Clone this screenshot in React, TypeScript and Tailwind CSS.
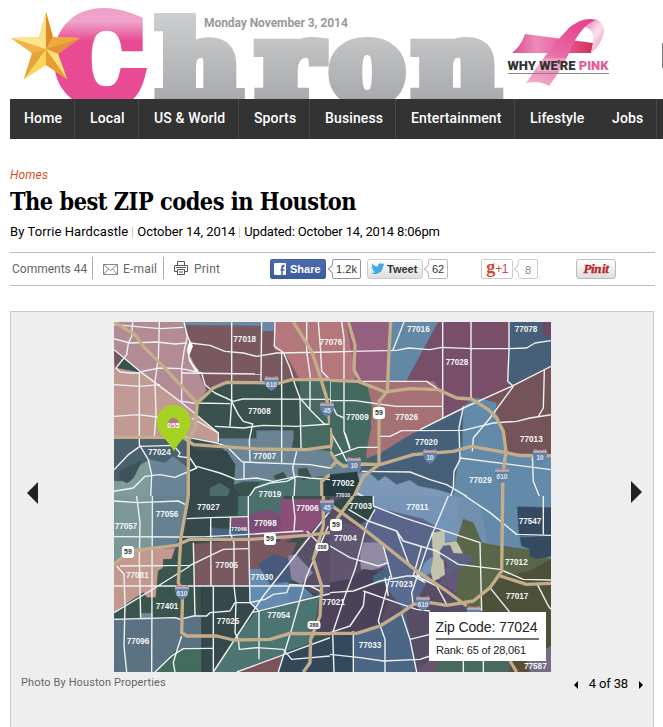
import React from "react";

type Shape = [string, string];
type Label = [string, number, number];

interface TileData {
  id: string;
  x: number;
  y: number;
  base: string;
  areas: Shape[];
  streets: string[];
  freeways: string[];
  labels: Label[];
}

// Each quadrant is drawn on a grid three times finer than the map itself.
const tiles: TileData[] = [
  {
    id: "nw", x: 110, y: 318, base: "#3a524e",
    areas: [
      ["12,12 222,12 235,60 240,110 265,160 285,195 290,215 262,260 180,235 95,165 12,95", "#b28b94"],
      ["12,95 35,125 15,150 95,165 215,255 325,345 325,375 240,355 12,358", "#c09a93"],
      ["95,165 180,180 262,260 250,290 215,255", "#b28b94"],
      ["12,95 35,125 15,150", "#70575c"],
      ["222,12 495,12 495,40 222,40", "#6989a4"],
      ["225,22 455,24 458,42 495,40 495,95 525,105 570,185 360,190 290,215 265,160 240,110 235,60", "#79595f"],
      ["495,12 660,12 660,185 570,185 525,105 495,95", "#b4777b"],
      ["570,190 660,190 660,395 575,395", "#48695f"],
      ["325,362 440,362 440,338 550,338 550,360 545,390 660,400 660,490 400,490 370,500 370,460 350,410", "#6a8495"],
      ["12,360 235,360 240,540 12,540", "#4b606d"],
      ["12,490 60,492 75,450 120,425 125,540 12,540", "#809c9a"],
      ["120,425 165,435 190,415 232,450 232,540 120,540", "#698597"],
      ["30,460 65,440 95,430 70,480 50,495 28,480", "#3d525a"],
      ["240,385 270,400 350,400 375,440 370,510 400,540 240,540", "#354849"],
      ["300,510 330,495 360,515 350,540 300,540", "#4c6c69"],
      ["450,495 520,480 660,475 660,540 410,540", "#4a716c"],
      ["565,475 565,452 590,450 605,480 580,485", "#3b504f"],
      ["490,475 520,462 530,478 505,490", "#3b504f"],
      ["635,490 660,475 660,540 635,530", "#263b3b"],
    ],
    streets: [
      "M68 12 65 55 55 75 50 110 18 150 30 162 60 165 90 165",
      "M12 20 150 32 220 28", "M12 62 60 75 140 72 195 78 230 75",
      "M148 12 145 120 135 190 138 290 133 355",
      "M12 95 90 160 210 250 325 345 325 372",
      "M88 162 88 380 115 425 125 470 122 540",
      "M12 200 90 205 150 200", "M12 295 85 290 140 297 155 300",
      "M95 160 150 150 215 152 275 165 285 200 315 225 370 250 398 243 660 244",
      "M222 12 232 55 222 100 215 150 215 250 250 255 360 257",
      "M240 75 300 82 345 100 400 105 440 115 500 105 660 102",
      "M365 12 365 245 360 325", "M455 12 453 190",
      "M495 12 493 85 520 103 540 150 555 200 570 240 600 275 645 320",
      "M215 165 455 168", "M515 100 515 435",
      "M590 12 590 100 600 170 600 275", "M625 12 632 100 635 160 660 185",
      "M315 325 400 330 460 322 560 325 660 318",
      "M365 250 385 290 400 310 428 318 418 365 420 430",
      "M245 300 325 345", "M220 355 320 375 350 385 390 425 402 435 402 485",
      "M570 240 573 390", "M400 432 520 437 600 440 660 450",
      "M12 455 55 410 90 385 190 382 210 405 205 415 240 420 260 450 195 478 150 470 105 475 70 510 12 520",
      "M260 445 330 465 380 485 440 480 490 490 560 475 600 480 660 485",
      "M415 540 435 510 480 495 530 490 560 475", "M560 400 548 450 555 485 552 540",
    ],
    freeways: [
      "M12 12 75 50 100 85 160 145 210 200 262 255",
      "M262 255 310 210 350 193 510 195 545 185 660 185",
      "M262 255 255 330 235 370 235 540",
      "M12 358 220 358 250 380 370 388 440 393 590 395 660 385",
      "M550 12 580 60 605 100 630 175 650 240 660 320",
      "M635 540 635 490 660 470",
    ],
    labels: [["77018", 404, 72], ["77008", 448, 287], ["77024", 148, 410], ["77007", 464, 424]],
  },
  {
    id: "ne", x: 330, y: 318, base: "#46607a",
    areas: [
      ["0,12 75,12 75,185 0,185", "#b4777b"],
      ["48,12 190,12 175,100 175,190 90,190 75,150", "#95607f"],
      ["185,12 325,12 230,190 172,190", "#6288a6"],
      ["325,12 535,12 535,205 400,265 340,300 340,225 310,190 230,188", "#784e69"],
      ["537,12 663,12 663,145 537,205", "#46607a"],
      ["637,12 663,12 663,60 640,50", "#6d4967"],
      ["663,145 663,412 530,405 520,340 490,270 430,245 537,205", "#745359"],
      ["108,190 310,190 340,225 340,300 240,350 150,405 110,420 105,380 125,330 112,250", "#a57175"],
      ["0,190 108,190 125,260 120,340 105,420 140,435 0,440", "#446a60"],
      ["400,265 440,240 500,255 495,280 520,340 530,405 663,410 663,540 370,540 385,425 398,395", "#638aa9"],
      ["85,465 115,462 145,490 165,475 200,500 240,487 265,505 320,515 370,530 370,540 70,540", "#7d99b7"],
      ["0,410 30,435 95,445 80,480 0,475", "#637f90"],
      ["0,470 80,462 90,500 60,540 0,540", "#263c40"],
    ],
    streets: [
      "M35 12 42 60 42 340 60 395", "M0 102 70 100 200 97 235 90 300 95 335 88 425 92 535 92 590 90 615 75 663 68",
      "M338 12 338 300", "M423 12 423 245", "M537 12 537 100 533 190 550 205",
      "M222 12 188 98", "M80 190 290 190 320 210", "M0 248 75 248 145 258 200 265 338 265",
      "M270 335 400 270 545 205 663 145", "M643 155 640 270 625 295",
      "M550 205 480 300 430 360 427 400", "M150 355 180 355 215 338 400 337 490 315 560 310 600 300 663 290",
      "M400 265 387 330 390 425 372 460 370 510 360 540", "M390 420 663 455", "M607 415 610 490 630 540",
      "M95 460 240 462 300 485 350 500 410 535", "M10 415 85 388 145 388", "M0 340 35 400 50 430",
      "M0 190 0 250 20 290 42 300", "M80 525 110 540", "M45 345 60 390",
    ],
    freeways: [
      "M55 12 75 80 72 155 90 190", "M182 12 177 100 172 220",
      "M0 187 85 190 165 222 240 212 325 215 380 240 425 243 475 275 500 300 520 340 528 400 518 470 518 540",
      "M170 222 147 250 147 435", "M0 400 20 430 40 445 90 438 150 440 250 410 370 400 425 385 535 405 570 413 663 413",
      "M150 438 100 475 70 540", "M0 330 5 370 0 395", "M20 430 0 450",
    ],
    labels: [["77016", 265, 42], ["77078", 588, 42], ["77028", 381, 142], ["77009", 82, 306], ["77026", 230, 306], ["77020", 289, 381], ["77013", 604, 372], ["77029", 451, 495], ["77002", 39, 504]],
  },
  {
    id: "sw", x: 110, y: 496, base: "#3b514e",
    areas: [
      ["12,0 125,0 125,150 12,210", "#7b9796"],
      ["125,0 235,0 215,150 125,150", "#64818f"],
      ["12,205 60,165 205,155 185,190 160,190 160,215 145,225 138,305 110,305 100,290 45,325 12,350", "#c2988f"],
      ["205,130 250,140 250,365 12,365 12,350 100,290 110,305 138,305 145,225 160,215 160,190 185,190", "#3a554e"],
      ["12,368 275,363 275,528 12,528", "#5a7282"],
      ["90,352 128,352 128,370 90,370", "#758999"],
      ["135,528 200,460 275,455 275,528", "#456b5e"],
      ["275,272 310,270 310,528 275,528", "#30443f"],
      ["235,0 385,0 380,50 350,65 360,110 215,132", "#35484a"],
      ["300,95 415,105 415,125 300,125", "#486582"],
      ["360,62 415,62 415,105 360,90", "#7e5179"],
      ["385,0 520,0 520,60 385,60", "#4a716c"],
      ["418,60 440,48 480,42 515,60 535,115 418,135", "#7c4e77"],
      ["512,10 645,10 645,60 600,110 512,140", "#8b4e79"],
      ["252,145 420,130 560,140 535,200 480,260 420,268 252,268", "#79585f"],
      ["418,220 470,220 540,265 560,290 535,335 440,340 418,320", "#648cb3"],
      ["445,205 490,175 540,190 545,255 480,265", "#455a7c"],
      ["535,180 580,170 610,230 575,265 545,250", "#8b849f"],
      ["535,265 570,265 610,300 440,345 540,330", "#5f82a9"],
      ["555,170 600,110 660,60 660,300 610,290 575,265 610,230", "#594f67"],
      ["310,270 418,270 418,320 440,345 375,430 310,528 278,528 278,272", "#35484a"],
      ["440,345 630,300 615,420 520,528 310,528 375,430", "#4c7571"],
      ["375,528 515,478 500,528", "#7b5359"],
      ["520,470 660,425 660,528 505,528", "#33475b"],
      ["630,300 660,295 660,420 612,410", "#4c445b"],
    ],
    streets: [
      "M12 15 85 20 205 15 225 25", "M80 0 90 80 88 190 92 365", "M127 0 125 528",
      "M12 122 200 123 290 122 415 115 580 105", "M230 68 300 65 415 62",
      "M302 65 303 270", "M362 62 360 110 372 140 372 270 378 320 375 410 385 430 388 460 440 455 520 460",
      "M415 0 415 62 420 320", "M250 140 255 360", "M30 210 240 208 340 160 415 158",
      "M12 350 120 285 240 210", "M12 270 660 270", "M20 210 42 235 45 325 42 450 50 528",
      "M12 370 195 365 210 370 250 360 290 360 300 350 360 345 375 320 420 320 465 310 490 295 530 290 540 265 600 270 640 290",
      "M310 270 310 528", "M310 528 420 360 460 300 660 45", "M420 320 447 345 447 490",
      "M425 350 630 300 660 293", "M380 528 660 425", "M215 420 205 450 190 500 195 528",
      "M135 528 185 480 220 458 310 457", "M505 528 545 400 590 240 655 90",
      "M520 460 545 490 660 480", "M548 0 555 65 552 105", "M590 105 625 140",
    ],
    freeways: [
      "M235 0 212 130 205 260 218 285 215 410 230 420 320 420 370 432 480 430 540 412 660 413",
      "M12 205 60 165 200 148 240 130 420 130 590 118 660 110",
      "M640 0 640 90 610 190 635 270 630 360 602 430 600 500 580 528",
    ],
    labels: [["77027", 295, 42], ["77056", 171, 62], ["77057", 48, 100], ["77006", 592, 46], ["77098", 466, 89], ["77005", 350, 216], ["77081", 82, 246], ["77030", 456, 253], ["77401", 171, 338], ["77054", 506, 367], ["77025", 354, 384], ["77096", 84, 444]],
  },
  {
    id: "se", x: 330, y: 496, base: "#574e66",
    areas: [
      ["130,0 663,0 663,190 600,165 530,150 460,150", "#638ba9"],
      ["130,0 375,0 395,15 440,60 465,110 465,150 400,75 380,140 130,50", "#7594b6"],
      ["385,0 450,30 465,100 470,145 455,145 430,80 385,75", "#7290ae"],
      ["50,50 140,35 280,70 330,100 300,240 250,330 180,260 100,90", "#59658a"],
      ["305,110 345,105 345,140 390,135 400,172 340,190 345,240 310,255 300,220 310,180", "#c4c3ad"],
      ["345,105 345,138 378,134 395,80 360,80", "#7594b6"],
      ["285,200 310,180 300,230 285,240 270,230", "#7594b6"],
      ["330,165 340,150 360,148 370,172 430,175 425,205 390,290 330,260 347,235 350,200 332,185", "#5c6083"],
      ["330,245 390,215 395,290 370,290", "#62567a"],
      ["400,70 430,80 455,140 530,155 600,160 663,190 663,350 455,350 380,310 385,220 425,200 425,175 400,172 380,135", "#596647"],
      ["455,300 515,245 600,225 663,190 663,528 455,528", "#4d513a"],
      ["562,32 663,35 663,120 568,120", "#344a60"],
      ["570,125 663,120 663,180 620,188 600,180 600,158 575,150", "#344a60"],
      ["0,25 50,0 130,0 130,60 90,85 50,50", "#304947"],
      ["0,65 100,100 130,120 90,180 60,260 0,280", "#615672"],
      ["130,140 155,140 175,200 150,215 95,230 90,180 100,140", "#918aa4"],
      ["0,260 60,250 100,220 140,225 180,290 150,380 70,410 0,410", "#4b4259"],
      ["70,415 150,385 225,350 260,528 70,528", "#4a6684"],
      ["0,420 70,418 70,528 0,528", "#32485c"],
      ["165,270 185,245 260,240 250,330 225,345", "#5a6b92"],
      ["130,240 175,215 180,255 130,265", "#45677d"],
      ["250,528 320,480 330,528", "#69546f"],
      ["330,495 600,495 600,528 310,528", "#49695f"],
      ["540,495 600,495 620,528 540,528", "#5a4d36"],
      ["590,495 663,450 663,528 600,528", "#766d87"],
    ],
    streets: [
      "M130 0 130 30 220 65 330 100 450 140 455 345", "M55 40 115 75 200 105 220 135 320 165 385 205 510 220 580 250 663 252",
      "M355 0 300 130 245 290 250 330", "M405 0 480 50 560 115 663 118", "M640 0 640 115",
      "M135 40 110 85 75 220 45 300 8 410 12 528", "M200 105 235 200 280 255",
      "M0 150 60 185 145 210 175 200", "M160 150 185 245", "M0 290 70 285 150 255 230 240 260 240 320 270 350 325",
      "M180 240 170 280 145 375 165 430 165 528", "M100 285 200 320 260 340 300 345",
      "M70 405 70 528", "M0 475 90 485 160 495 270 490 300 480", "M215 355 240 430 260 528",
      "M240 430 300 415", "M480 275 540 350", "M622 265 655 330 663 340", "M400 490 400 528", "M460 490 460 528",
      "M275 150 250 240 285 260", "M0 410 60 390 100 330 105 285", "M165 245 175 300",
    ],
    freeways: [
      "M0 25 90 90 160 145 260 225 350 285 410 330", "M70 0 20 70",
      "M518 0 515 225 480 275 430 315 350 328 300 320 250 325 215 350 150 390 80 412 0 412",
      "M510 240 590 265 663 262", "M540 495 560 528",
    ],
    labels: [["77003", 92, 39], ["77011", 262, 42], ["77547", 600, 83], ["77004", 46, 134], ["77012", 559, 206], ["77023", 214, 274], ["77017", 561, 310], ["77033", 120, 455], ["77587", 616, 520]],
  },
];

function Tile({ tile }: { tile: TileData }) {
  return (
    <svg x={tile.x} y={tile.y} width="225" height="180" viewBox="0 0 675 540">
      <rect width="675" height="540" fill={tile.base} />
      {tile.areas.map(([points, fill], i) => (
        <polygon key={i} points={points} fill={fill} stroke={fill} strokeWidth="1.5" />
      ))}
      <g fill="none" stroke="#eef2f2" strokeWidth="4.2" strokeLinejoin="round">
        {tile.streets.map((d) => <path key={d} d={d} />)}
      </g>
      <g fill="none" stroke="#c4ad8b" strokeWidth="10" strokeLinejoin="round">
        {tile.freeways.map((d) => <path key={d} d={d} />)}
      </g>
      <g fill="#f4f6f6" fontFamily="'Liberation Sans', Arial, sans-serif" fontWeight="700" fontSize="24.5" textAnchor="middle">
        {tile.labels.map(([t, x, y]) => <text key={t} x={x} y={y}>{t}</text>)}
      </g>
    </svg>
  );
}

function Interstate({ x, y, n }: { x: number; y: number; n: string }) {
  return (
    <g transform={`translate(${x} ${y})`}>
      <path d="M-7-5Q-8 4 0 8Q8 4 7-5Q0-3-7-5Z" fill="#6380a6" />
      <path d="M-6-7Q0-5 6-7L7-4H-7Z" fill="#b9888b" />
      <path d="M-7-4H7" stroke="#dde" strokeWidth=".8" />
      <text y="4" fontSize="6.5" fontWeight="700" textAnchor="middle" fill="#e1e8ef">{n}</text>
    </g>
  );
}

function Route({ x, y, n }: { x: number; y: number; n: string }) {
  const w = n.length > 2 ? 13 : 12;
  const h = n.length > 2 ? 8 : 12;
  return (
    <g transform={`translate(${x} ${y})`}>
      <rect x={-w / 2} y={-h / 2} width={w} height={h} rx="3" fill="#fff" />
      <text y="2.3" fontSize={n.length > 2 ? 5.5 : 7} fontWeight="700" textAnchor="middle" fill="#333">{n}</text>
    </g>
  );
}

function HoustonMap() {
  return (
    <svg className="block h-[350px] w-[437px] shrink-0" viewBox="114 322 437 350" fontFamily="'Liberation Sans', Arial, sans-serif">
      <defs>
        <clipPath id="c-nw"><rect x="110" y="318" width="220" height="178" /></clipPath>
        <clipPath id="c-ne"><rect x="330" y="318" width="225" height="178" /></clipPath>
        <clipPath id="c-sw"><rect x="110" y="496" width="220" height="180" /></clipPath>
        <clipPath id="c-se"><rect x="330" y="496" width="225" height="180" /></clipPath>
      </defs>
      <g clipPath="url(#c-nw)"><Tile tile={tiles[0]} /></g>
      <g clipPath="url(#c-ne)"><Tile tile={tiles[1]} /></g>
      <g clipPath="url(#c-sw)"><Tile tile={tiles[2]} /></g>
      <g clipPath="url(#c-se)"><Tile tile={tiles[3]} /></g>
      <g fill="#f4f6f6" fontWeight="700" textAnchor="middle">
        <text x="331" y="345" fontSize="8.2">77076</text>
        <text x="333.500" y="604.500" fontSize="8.2">77021</text>
        <text x="270" y="497" fontSize="8.2">77019</text>
        <text x="239" y="530.500" fontSize="5.8">77046</text>
        <text x="343" y="497" fontSize="5.2">77010</text>
      </g>
      <path d="M184 325 189 338 193 346 189 356 193 364 199 371 195 371 189 361 187 350 189 342Z" fill="#fff" />
      <Interstate x={271.5} y={383} n="610" />
      <Interstate x={327} y={409} n="45" />
      <Interstate x={354} y={464} n="10" />
      <Interstate x={430} y={456} n="10" />
      <Interstate x={540} y={456} n="10" />
      <Interstate x={502} y={475} n="610" />
      <Interstate x={327} y={506} n="45" />
      <Interstate x={182} y={592} n="610" />
      <Interstate x={423} y={603} n="610" />
      <Interstate x={474} y={613} n="" />
      <Route x={379} y={413} n="59" />
      <Route x={128} y={552} n="59" />
      <Route x={270} y={539} n="59" />
      <Route x={336} y={525} n="59" />
      <Route x={322} y={547} n="288" />
      <Route x={314} y={625} n="288" />
      <path d="M174 451.500C168 439 156.700 435 156.700 422A17 17 0 0 1 190.700 422C190.700 435 180 439 174 451.500Z" fill="#a5d223" />
      <circle cx="173.500" cy="423" r="5.200" fill="#b77782" />
      <text x="173.500" y="427.500" fontSize="7.500" fontWeight="700" fill="#fff" textAnchor="middle">055</text>
      <rect x="429" y="612" width="117" height="49" fill="#fff" />
      <text x="435.500" y="632" fontSize="14" fill="#222" textLength="102">Zip Code: 77024</text>
      <path d="M436 639H539" stroke="#444" strokeWidth="1.300" />
      <text x="436" y="653.500" fontSize="11" fill="#222" textLength="90">Rank: 65 of 28,061</text>
    </svg>
  );
}

function ChronLogo() {
  return (
    <svg className="block h-[99px] w-[504px] shrink-0" viewBox="0 0 504 99" fontFamily="'DejaVu Serif', serif" fontWeight="700">
      <defs>
        <linearGradient id="pink" gradientUnits="userSpaceOnUse" x1="0" y1="8" x2="0" y2="99">
          <stop offset="0" stopColor="#ee9fc7" />
          <stop offset=".15" stopColor="#efa4ca" />
          <stop offset=".36" stopColor="#e84b93" />
          <stop offset="1" stopColor="#e84b93" />
        </linearGradient>
        <linearGradient id="gray" gradientUnits="userSpaceOnUse" x1="0" y1="10" x2="0" y2="99">
          <stop offset="0" stopColor="#cfd0d1" />
          <stop offset="1" stopColor="#a9aaad" />
        </linearGradient>
      </defs>
      <text transform="translate(57 0) scale(.96 1)" y="98.500" fontSize="112" fill="url(#pink)" stroke="url(#pink)" strokeWidth="16">C</text>
      <g fill="url(#gray)" stroke="url(#gray)" strokeWidth="12" fontSize="107">
        <text transform="translate(157 0) scale(1.08 1)" y="100">h</text>
        <text transform="translate(257 0) scale(1.13 1)" y="100">r</text>
        <text transform="translate(330 0) scale(1.04 1)" y="100">o</text>
        <text transform="translate(413 0) scale(1.11 1)" y="100">n</text>
      </g>
      <g>
        <path d="M46 12 53 37 80 38 58 54 67 79 46 65 24 79 32 53 11 38 39 37Z" fill="#f8cb4c" />
        <path d="M46 12 53 37 46 49Z" fill="#df8b28" />
        <path d="M46 12 39 37 46 49Z" fill="#fbe28a" />
        <path d="M80 38 53 37 46 49Z" fill="#eda83f" />
        <path d="M80 38 58 54 46 49Z" fill="#e2933a" />
        <path d="M67 79 58 54 46 49Z" fill="#fce27b" />
        <path d="M67 79 46 65 46 49Z" fill="#e89d31" />
        <path d="M24 79 46 65 46 49Z" fill="#fad55c" />
        <path d="M24 79 32 53 46 49Z" fill="#e9a23b" />
        <path d="M11 38 39 37 46 49Z" fill="#fbe58d" />
        <path d="M11 38 32 53 46 49Z" fill="#f0b347" />
      </g>
    </svg>
  );
}

function PinkRibbon() {
  return (
    <svg className="block h-[99px] w-[106px] shrink-0" viewBox="504 0 106 99">
      <defs>
        <linearGradient id="rb1" x1="0" x2="1"><stop offset="0" stopColor="#dc4a90" /><stop offset=".3" stopColor="#ed8bb8" /><stop offset=".65" stopColor="#e65a9a" /><stop offset="1" stopColor="#d22f55" /></linearGradient>
        <linearGradient id="rb2" x1=".7" y1="0" x2=".2" y2="1"><stop offset="0" stopColor="#e54390" /><stop offset=".45" stopColor="#e765a2" /><stop offset="1" stopColor="#f2abcb" /></linearGradient>
        <linearGradient id="rb3" x1="0" y1="0" x2="1" y2="1"><stop offset="0" stopColor="#e35a9c" /><stop offset=".55" stopColor="#f9e1ec" /><stop offset="1" stopColor="#e888b4" /></linearGradient>
      </defs>
      <path d="M525 34 593 43 591 53H512Q521 46 525 34Z" fill="url(#rb1)" />
      <path d="M578 22Q588 17 598 20Q605 24 604 33Q601 45 591 53Q595 40 592 32Q588 26 578 27Z" fill="url(#rb3)" />
      <path d="M526 83Q548 50 567 30Q576 20 590 19L596 20Q588 23 583 29Q575 38 570 51Q562 69 549 86Q539 80 526 83Z" fill="url(#rb2)" />
      <path d="M539 58H578V71H537Z" fill="#fff" opacity=".25" />
      <text x="507.500" y="69.500" fontFamily="Roboto, sans-serif" fontSize="13" fontWeight="900" fill="#333" textLength="101" lengthAdjust="spacingAndGlyphs">
        WHY WE'RE <tspan fill="#e45b9a">PINK</tspan>
      </text>
      <path d="M508 73.500H609" stroke="#888" />
    </svg>
  );
}

function Bubble({ children, className }: { children: React.ReactNode; className: string }) {
  return (
    <div className={`relative flex h-5 items-center justify-center rounded-[2px] border bg-white ${className}`}>
      <span className="absolute top-[6px] -left-[4px] h-[6px] w-[6px] rotate-45 border-b border-l border-inherit bg-white" />
      {children}
    </div>
  );
}

const navItems: [string, string][] = [
  ["Home", "w-[65px] pl-[14px] border-r"],
  ["Local", "w-[64px] pl-[15px] border-r"],
  ["US & World", "w-[100px] pl-[15px] border-r"],
  ["Sports", "w-[71px] pl-[15px] border-r"],
  ["Business", "w-[86px] pl-[15px] border-r"],
  ["Entertainment", "w-[119px] pl-[15px] border-r"],
  ["Lifestyle", "w-[82px] pl-[15px]"],
  ["Jobs", "w-[60px] pl-[15px] border-r"],
];

export default function App() {
  return (
    <div className="h-[727px] w-[663px] overflow-hidden bg-white font-[Roboto,sans-serif] text-black">
      <header className="relative flex h-[99px]">
        <ChronLogo />
        <PinkRibbon />
        <span className="absolute top-[15px] left-[204px] text-[12px] leading-4 font-bold tracking-[-0.06px] whitespace-nowrap text-[#999]">Monday November 3, 2014</span>
        <span className="mt-[43px] ml-auto h-[25px] w-px bg-[#777]" />
      </header>

      <nav className="ml-[10px] flex h-10 bg-[#333] text-[14px] leading-[38px] font-medium tracking-[0.13px] text-white">
        {navItems.map(([label, cls]) => (
          <a key={label} className={`shrink-0 border-[#484848] whitespace-nowrap ${cls}`}>{label}</a>
        ))}
      </nav>

      <section className="ml-[10px] w-[645px]">
        <div className="pt-[28px] text-[12px] leading-4 text-[#d9501f] tracking-[0.15px] italic">Homes</div>
        <h1 className="mt-[3px] h-[31px] w-max origin-left scale-x-[0.97] font-['DejaVu_Serif_Condensed','DejaVu_Serif',serif] text-[24px] leading-[31px] font-bold tracking-[-0.5px] whitespace-nowrap">The best ZIP codes in Houston</h1>
        <div className="mt-[7px] flex h-4 items-center text-[13px] leading-4 whitespace-nowrap">
          <span className="tracking-[0.08px]">By Torrie Hardcastle</span>
          <span className="mx-[4px] h-[11px] w-px bg-[#ccc]" />
          <span className="tracking-[-0.05px]">October 14, 2014</span>
          <span className="mx-[4px] h-[11px] w-px bg-[#ccc]" />
          <span className="tracking-[-0.16px]">Updated: October 14, 2014 8:06pm</span>
        </div>

        <div className="mt-[12px] flex h-[34px] items-start border-y border-[#bbb] pt-[6px] text-[12px] text-[#666]">
          <div className="-mt-[2px] flex h-[22px] w-[83px] items-center border-r border-[#aaa] pt-[2px] pl-[2px] whitespace-nowrap"><span className="tracking-[0px]">Comments 44</span></div>
          <div className="-mt-[2px] flex h-[22px] w-[71px] items-center border-r border-[#aaa] pt-[2px] pl-[10px]">
            <svg width="15" height="11" viewBox="0 0 15 11" fill="none" stroke="#888"><path d="M.5.5H14.500V10.500H.5ZM.5.5 7.500 6.500 14.500.5M.5 10.500 5.500 5M14.500 10.500 9.500 5" /></svg>
            <span className="ml-[5px] tracking-[0.2px] whitespace-nowrap">E-mail</span>
          </div>
          <div className="-mt-[2px] flex h-[22px] w-[106px] items-center pt-[2px] pl-[10px]">
            <svg className="-mt-[2px]" width="14" height="14" viewBox="0 0 14 14" fill="none" stroke="#555"><path d="M3.500 4V.5H10.500V4M3 10.500H.5V4.500H13.500V10.500H11M3.500 8.500H10.500V13.500H3.500ZM2 6.500H12M5 11H9" /></svg>
            <span className="ml-[6px] tracking-[0.2px]">Print</span>
          </div>
          <div className="flex font-['Liberation_Sans',Arial,sans-serif]">
            <div className="flex h-5 w-14 items-center rounded-[2px] border border-[#3d5c9c] bg-linear-to-b from-[#4c6bb0] to-[#3d5b9f] pl-[3px] text-[11px] font-bold text-white">
              <svg width="12" height="12" viewBox="0 0 12 12"><rect width="12" height="12" rx="1" fill="#fff" /><path d="M10.500 3H9.500Q8.500 3 8.500 4V6M6.500 7H10.500M8 12V4Q8 2.500 9.500 2.500H10.500" fill="none" stroke="#4663a8" strokeWidth="1.500" /></svg>
              <span className="ml-1">Share</span>
            </div>
            <Bubble className="ml-[6px] w-[29px] border-[#8b94a8] text-[11px] text-[#333]">1.2k</Bubble>
            <div className="ml-[6px] flex h-5 w-14 items-center rounded-[3px] border border-[#ccc] bg-linear-to-b from-white to-[#dedede] pl-[3px] text-[11px] font-bold text-[#333]">
              <svg width="14" height="12" viewBox="0 0 14 12"><path d="M13.500 1.700 12 3.200C12 8.500 7 12 2 10.800L0 10C2 10 3.300 9.500 4 8.700 2.600 8.500 1.800 7.700 1.500 6.800H2.700C1.300 6.200.6 5.200.6 4L1.800 4.400C.7 3.400.6 2 1 .8 2.500 2.500 4.300 3.400 6.700 3.500 6.500 1 9.500-.9 11.600 1L13.300.3 12.400 1.900Z" fill="#42a9e5" /></svg>
              <span className="ml-[2px]">Tweet</span>
            </div>
            <Bubble className="ml-[5px] w-5 border-[#bbb] text-[11px] text-[#333]">62</Bubble>
            <div className="ml-[33px] flex h-5 w-8 items-center justify-center rounded-[2px] border border-[#ccc] text-[#d24a3b]"><span className="-mt-[5px] font-['Liberation_Serif',serif] text-[18px] leading-3 font-bold">g</span><span className="text-[12px] tracking-[-0.5px]">+1</span></div>
            <Bubble className="ml-[5px] w-5 border-[#ccc] text-[11px] text-[#888]"><span className="pt-[2px]">8</span></Bubble>
            <div className="ml-[38px] flex h-5 w-10 items-center justify-center rounded-[3px] border border-[#bbb] bg-linear-to-b from-white to-[#ddd] font-['Liberation_Serif',serif] text-[13px] font-bold tracking-[-0.4px] text-[#bd2027] italic"><span className="whitespace-nowrap [word-spacing:-2px] [-webkit-text-stroke:0.3px]">Pin it</span></div>
          </div>
        </div>
      </section>

      <main className="mt-[25px] ml-[10px] h-[430px] w-[644px] border border-[#c6c6c6] bg-[#eee] pt-[10px]">
        <div className="flex items-center">
          <svg className="mr-[76px] mb-[8px] ml-[16px] h-[22px] w-[11px] shrink-0" viewBox="0 0 11 22"><path d="M11 0V22L0 11Z" fill="#222" /></svg>
          <HoustonMap />
          <svg className="mb-[10px] ml-[80px] h-[22px] w-[11px] shrink-0" viewBox="0 0 11 22"><path d="M0 0V22L11 11Z" fill="#222" /></svg>
        </div>
        <div className="flex h-[23px] items-center justify-between pr-[10px] pl-[10px] whitespace-nowrap">
          <span className="text-[11px] tracking-[0.12px] text-[#666]">Photo By Houston Properties</span>
          <div className="flex items-center text-[13px]">
            <svg className="mt-[2px]" width="4" height="8" viewBox="0 0 4 8"><path d="M4 0V8L0 4Z" /></svg>
            <span className="mr-[11px] ml-[11px] tracking-[-0.15px]">4 of 38</span>
            <svg className="mt-[2px]" width="4" height="8" viewBox="0 0 4 8"><path d="M0 0V8L4 4Z" /></svg>
          </div>
        </div>
      </main>
    </div>
  );
}
